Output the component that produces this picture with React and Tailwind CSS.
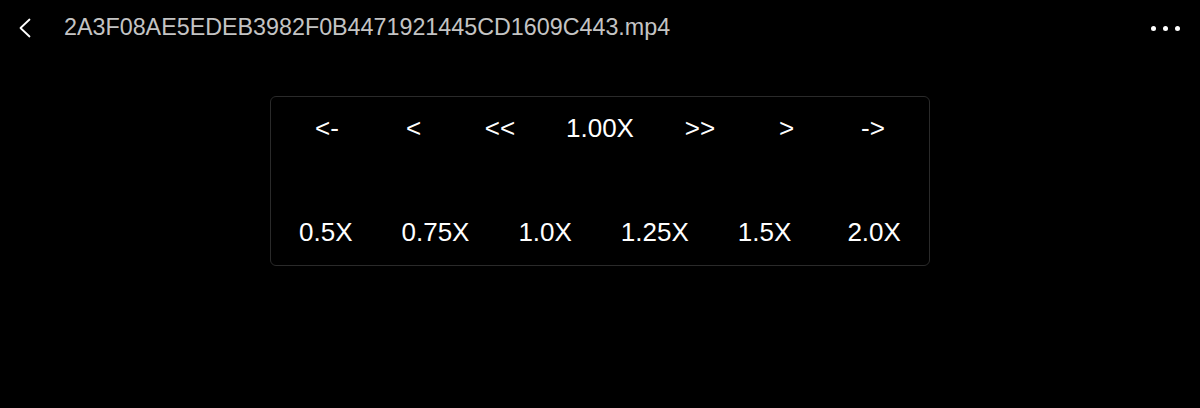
const topRow = ["<-", "<", "<<", "1.00X", ">>", ">", "->"];
const speeds = ["0.5X", "0.75X", "1.0X", "1.25X", "1.5X", "2.0X"];

export default function App() {
  return (
    <div
      className="w-[1200px] h-[408px] bg-black text-white flex flex-col"
      style={{ fontFamily: '"Liberation Sans", Arial, sans-serif' }}
    >
      <div className="h-[56px] flex items-center pl-[18px] pr-[20px]">
        <button className="w-[14px] h-[20px] text-white">
          <svg viewBox="0 0 14 20" width="14" height="20" fill="none" stroke="currentColor" strokeWidth="1.8" strokeLinecap="round" strokeLinejoin="round">
            <path d="M11.5 1.5 L2.5 10 L11.5 18.5" />
          </svg>
        </button>
        <h1 className="ml-[32px] text-[23.3px] text-[#c4c4c4] leading-none">
          2A3F08AE5EDEB3982F0B4471921445CD1609C443.mp4
        </h1>
        <div className="ml-auto flex items-center gap-[7px]">
          <span className="w-[5px] h-[5px] rounded-full bg-white" />
          <span className="w-[5px] h-[5px] rounded-full bg-white" />
          <span className="w-[5px] h-[5px] rounded-full bg-white" />
        </div>
      </div>
      <div className="flex justify-center pt-[40px]">
        <div className="w-[660px] h-[170px] border border-[#2a2a2a] rounded-[6px] flex flex-col">
          <div className="flex items-center h-[62px] px-[26px] gap-[26.5px]">
            {topRow.map((t) => (
              <button
                key={t}
                className={
                  t === "1.00X"
                    ? "w-[87px] text-[26px] leading-none text-center text-white"
                    : "w-[60px] text-[26px] leading-none text-center text-white"
                }
              >
                {t}
              </button>
            ))}
          </div>
          <div className="grid grid-cols-6 mt-auto mb-[20px]">
            {speeds.map((s) => (
              <button key={s} className="text-[26px] leading-none text-center text-white">
                {s}
              </button>
            ))}
          </div>
        </div>
      </div>
    </div>
  );
}
